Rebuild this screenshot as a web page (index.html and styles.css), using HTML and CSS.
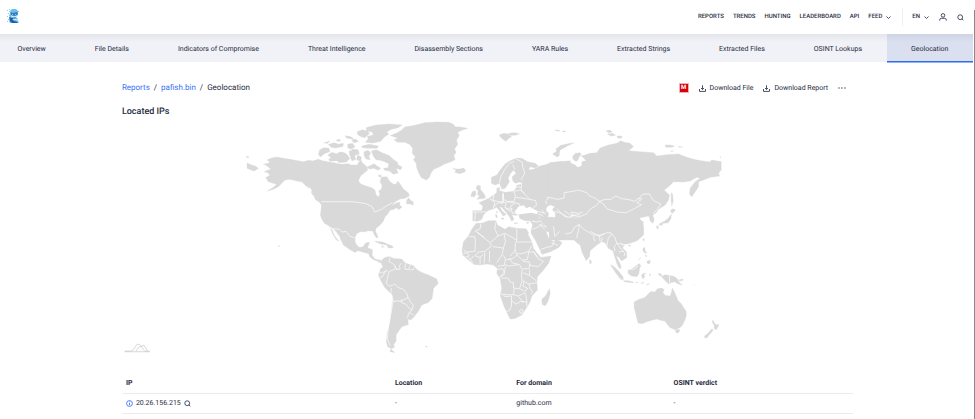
FILE: index.html
```html
<!DOCTYPE html>
<html lang="en">
<head>
<meta charset="utf-8">
<title>Geolocation</title>
<link rel="stylesheet" href="styles.css">
</head>
<body>
<header class="top">
  <a class="logo" href="#" aria-label="Home">
    <svg viewBox="0 0 14 16" width="14" height="16">
      <path d="M4 3l2-2h4l2 2v4l-2 2 2 2-1 1 2 2-1 1H4l-1-2 1-3-1-3 2-2z" fill="#6fbdea"/>
      <path d="M3 9l3 1 4-1-2 2H6l2 2 4 1-1 1-5 0-2-2z" fill="#1c5fae"/>
      <path d="M4 4l3 1 4-1 1 2-3 2-4-1z" fill="#2580c8"/>
      <path d="M6 6h1v1H6zM9 6h1v1H9z" fill="#e8a09c"/>
      <path d="M5 8l3 1 3-1M7 11l4 1" fill="none" stroke="#d9f1fc"/>
      <path d="M1 2h1v1H1zM3 1h1v1H3zM2 5h1v1H2zM1 8h1v1H1zM2 11h1v1H2zM1 13h1v1H1zM12 3h1v1h-1zM3 3h1v1H3z" fill="#8fcff0"/>
    </svg>
  </a>
  <nav class="menu" aria-label="Main">
    <a href="#">REPORTS</a>
    <a href="#">TRENDS</a>
    <a href="#">HUNTING</a>
    <a href="#">LEADERBOARD</a>
    <a href="#">API</a>
    <button type="button">FEED <svg class="chev" viewBox="0 0 5 3"><path d="M.5.5l2 2 2-2"/></svg></button>
  </nav>
  <div class="tools">
    <button type="button">EN <svg class="chev" viewBox="0 0 5 3"><path d="M.5.5l2 2 2-2"/></svg></button>
    <button type="button" aria-label="Account"><svg class="line" viewBox="0 0 8 8" width="8" height="8"><circle cx="4" cy="2.4" r="1.8"/><path d="M.7 7.6V7q0-1.700 1.700-1.700h3.200Q7.300 5.300 7.300 7v.6"/></svg></button>
    <button type="button" aria-label="Search"><svg class="line" viewBox="0 0 7 7" width="7" height="7"><circle cx="3.200" cy="3.200" r="2.400"/><path d="M4.900 4.900l1.400 1.400"/></svg></button>
  </div>
</header>
<nav class="tabs" aria-label="Report sections">
  <a href="#">Overview</a>
  <a href="#">File Details</a>
  <a href="#">Indicators of Compromise</a>
  <a href="#">Threat Intelligence</a>
  <a href="#">Disassembly Sections</a>
  <a href="#">YARA Rules</a>
  <a href="#">Extracted Strings</a>
  <a href="#">Extracted Files</a>
  <a href="#">OSINT Lookups</a>
  <a href="#" class="active" aria-current="page">Geolocation</a>
</nav>
<main class="content">
  <div class="bar">
    <nav class="crumbs" aria-label="Breadcrumb"><a href="#">Reports</a><span>/</span><a href="#">pafish.bin</a><span>/</span><span>Geolocation</span></nav>
    <div class="actions">
      <span class="badge">M</span>
      <button type="button"><svg class="line" viewBox="0 0 7 7" width="7" height="7"><path d="M3.500.3v4M2 3l1.500 1.500L5 3M.5 4v2.400h6V4"/></svg>Download File</button>
      <button type="button"><svg class="line" viewBox="0 0 7 7" width="7" height="7"><path d="M3.500.3v4M2 3l1.500 1.500L5 3M.5 4v2.400h6V4"/></svg>Download Report</button>
      <button type="button" aria-label="More"><svg class="dots" viewBox="0 0 8 2" width="8" height="2"><circle cx="1" cy="1" r=".7"/><circle cx="4" cy="1" r=".7"/><circle cx="7" cy="1" r=".7"/></svg></button>
    </div>
  </div>
  <h1>Located IPs</h1>
  <svg class="map" viewBox="366 360 2193 708" role="img" aria-label="World map">
    <!-- Alaska, western Canada, western US, Mexico -->
    <g transform="translate(705 345)">
      <path class="land" d="M92 150L85 147 100 145 104 140 96 135 110 129 125 126 145 130 165 133 188 137 205 140 222 136 232 138 250 133 262 137 278 140 296 143 318 148 340 146 352 152V370L360 385 375 400 388 412 370 407 345 397 330 388 325 375 312 362 302 348 287 336 268 325 260 312 256 300 258 285 259 270 254 262 240 252 235 236 228 222 215 208 200 200 185 198 165 193 150 195 140 205 130 215 115 223 97 228 115 217 125 208 112 204 100 200 92 188 105 180 96 172 88 171 96 166 108 163z"/>
      <path class="land" d="M36 144l14 6 12 4 8 6-12 8-10-3-12-5zM35 124l6 1-1 3-6-1zM201 201l14 5 8 14-9-6zM228 229l6 5 3 9-6-5zM240 251l12 4 8 9-8-3zM285 337l5 6 7 17 9 13 7 5-9-3-10-16zM130 391l4 2-3 2z"/>
      <path class="land" d="M254 104l12-6 16 2 2 10-16 6-12 10-6-8zM278 120l12-8 14 4 10-5 14 2 10 8 6 10-12 10-18 2-10-6-20 2-3-7 7-4zM280 88l18-5 12 5 14-3-4 10-18 4-14-2zM331 63l14 2 10 5-18-1zM266 84l18-6-6 7zM338 88l14-3 8 10-14 8-8-5zM342 108l12-2 9 10-7 12-12-6zM304 75l10-2 2 5-10 1z"/>
    </g>
    <!-- Eastern North America, the Arctic islands, Greenland -->
    <g transform="translate(1020 345)">
      <path class="land" d="M0 150L20 152 40 150 52 150 55 143 62 135 68 145 72 148 80 155 83 165 75 172 62 182 55 197 62 207 78 213 95 218 105 226 108 240 116 246 119 236 116 228 124 222 126 212 120 200 124 186 140 185 148 198 160 208 168 208 173 198 182 210 190 222 205 234 208 242 195 250 180 252 165 260 155 272 170 263 180 262 178 270 186 276 176 284 170 278 158 284 150 285 143 297 135 305 130 318 120 330 108 340 106 348 112 362 110 369 103 360 98 348 85 347 75 350 60 350 50 356 45 366 45 380 50 394 60 398 72 394 76 384 88 382 85 392 80 402 76 408 60 402 45 412 30 404 10 390 0 370z"/>
      <path class="land" d="M200 255l6-7 5 8 8 4 1 10-9-3-12-1zM78 38l30-8 40-3 38 3-12 8-20 5-14 8 6 6-14 10-10 12-24 5-22-2 8-10-2-8 18-4-4-9-16-3zM52 50l14-6 16 4 6 8-14 12-14-4-8-6zM65 93l22-5 28 5-4 7-28 0-16-2zM16 62l16 4 8 7-20-4zM35 75l12-3 8 8-14 3zM0 90l10-4-2 9zM2 112l12 3 10 14-4 12-20-4zM36 102l18 2 4 12-10 4-12-6zM30 126l12-4 6 10-12 6zM52 120l12 6-2 12-12-3zM72 110l12-4 8 8-6 10 4 10-12-2-6-10zM94 108l14-4 20 10 20 8 10 10 14 10 2 8 12 6-4 8-14-4 6 14-14 4-12-10-14-2-4-6 14-2 2-12-12-6-14-4-12-2-8-10zM90 152l12-6 10 8 10 6-8 6-12-6-14 2-8-6zM115 180l9 1-2 5-6-1z"/>
      <path class="land" d="M150 62l20-8 14-8 10-10 30-5 30-8 34-2 38 1 14 6 5 7 15 1 23 4-18 6-12 6 4 10-8 14 4 12-10 14 5 10-7 10 4 12-14 7-18 6-14 8-18 8-8 10-5 14-9 8-15-7-8-14-6-16-2-14-8-10 6-8-10-12 2-14-10-12-14-6-22 0-10-8 12-4-16-6z"/>
      <path class="land" d="M338 160l10 2 12 0 10-3 6 6-2 6-16 5-14-4 4-6zM104 378l18 3 14 8-14-2-14-6zM140 390l14 1 4 5-14 1zM124 393l8 2-6 2z"/>
      <path class="border" d="M-57 260h90l20 2 25 4 18 9 8 16 20-8 14-10 20-10M-30 339l18 3 10 0 8 9 12-2 12 15 13 4M-127 22v59M60 402l8 4"/>
    </g>
    <!-- Central and South America -->
    <g transform="translate(1080 705)">
      <path class="land" d="M0 38l10-2 4-8 10-4-2 14 15 6-1 16 8 12 12 2 8 2-4 8-8-6-12-4-12-10-2-8-13-4-13-6zM56 20l12 1 12 5 8 4-12-1-14-6zM83 33l14 1 3 4-14 1zM46 0l6 3 2 6-6-4zM196 333l6 1-3 3z"/>
      <path class="land" d="M62 82l6-10 10-6 12-1 10 5 25 2 10 12 25 8 12 13 13 7 20 8 25 12 4 13-14 15-4 30-11 12-20 8-10 18-13 17-10 10-9-3 2 16-20 7-7 10-10 15 0 18-8 12 4 5-9 6-12-6-4-14 2-24 9-38 5-42 3-36-25-25-12-22-6-13 6-20 8-5zM92 342l12 10-14-2z"/>
      <path class="border" d="M90 67l-4 12 14 8 6 6-2 10-16 6-4 12-2 10-4 14 10 8 8-2 8-4 10 10 16 6 10 12 4 14-12 4-8 6-14-2-8 4-6-14-4-14 2-14M94 182l4 20-4 26-6 28-4 30-2 24 8 22M56 110l10 4 10-6-8 16-10 4M76 104l8 6M112 104l-8-10M108 104l12-2-2-10 6-8M136 86l-2 16 12 2 4-14M148 104l12 0 2-8M146 188l4 12 10 10-4 14-10-6-8-10-14-6 0-10M148 232l12 8M156 224l-10 10-4 14"/>
    </g>
    <!-- Europe -->
    <g transform="translate(1350 360)">
      <path class="land" d="M124 172L140 165 150 150 165 132 180 122 200 114 215 115 232 125 255 130 265 138 255 144 240 140 235 150 250 148 270 138 285 134 300 130 330 126 360 122V334H265V318H250L240 302H225L208 295 207 284 200 286 185 285 192 298 185 304 178 290 170 280 155 262 148 260 158 275 168 283 160 288 150 275 140 262 125 268 112 272 100 285 95 298 82 304 68 302V272H95L98 258 86 248 105 240 118 234 130 225 140 218V205L148 202V212L165 217 190 214 198 205 200 196 215 192 210 186 195 190 188 182 186 170 198 160 190 150 180 162 174 175 178 185 165 205 155 208 148 190 135 195 124 190z"/>
      <path class="land" d="M82 195l10 4-2 8 8 10 8 12-2 6-24 3 8-9-6-6 2-10-6-8zM66 215l10-3 2 10-6 9-10-2zM148 44l14-4 12 2 10 8-10 6-6 8-10-6-8-8zM176 40l16-2 16 3-12 5-16 0zM308 102l12-6-2-8 14-8 28-10-12 10-18 10-4 12-4 8zM316 30l14 2-12 0zM338 33l8 1-8 1zM136 284l4 0 2 8-4 1zM138 276l4-2 0 6zM152 294l9 0-2 5zM192 308l12 1-10 2zM228 308l9-2-4 5z"/>
      <path class="sea" d="M194 275l10-15 17-4 7 9 11-5 24 14-2 9-17-5-30 4-14 2zM290 262l12-8 12 6-8 8 8 12 0 16-10 4-8-10 2-10-8-10z"/>
      <path class="border" d="M148 190l4-20 12-22 14-18 14-6M188 134l6 14M196 116l20 10 2 16 6 18-12 20M215 186l-2 24 14 16 12 12 18 4 2 14-10 8M68 276l30 0M76 276l-2 26M98 274l22 6M118 236l16 10-4 18M132 222l-4 18 14 4 16 2 0-26M158 222l2 24-20 4-8 10M160 218l0 20 12 6 20 0 4-18-6-12M152 250l20-4 22 2 14 4 4 16-18 6M168 250l-4 12 14 6 6-12 10-6M166 264l14 10 6-10M184 264l2 16 20-2M196 232l20 2 22 4M192 214l18-4 12 8M200 200l12 2M262 274l14 4 12 2M264 282l12 4 10 10M274 270l8 10M288 240l10-6 22-2 20-6 20 4M286 242l4 10M314 262l16 4 8 14 22-4M266 290l12 14 4 26M300 296l20 8 22-4 18 10M336 270l24 18M246 304l20-4 12 4M244 318l14-2 10-14"/>
    </g>
    <!-- Africa, Middle East -->
    <g transform="translate(1350 630)">
      <path class="land" d="M78 40l17 0 20-8 23 0 4 13 23 13 10-8 25 5 28 1 8 14-4 0 13 25 5 20 12 15 10 12 31-4-8 22-15 20-18 20-2 15 2 25-17 18-5 17-12 20-13 20-20 10-15 2-8-17-10-20-12-35 5-20-5-30-10-15 2-15-12-10-20-3-20 3-18-2-17-13-17-15-2-15 4-25 15-17 10-20zM276 266l10-8 12-22 2 14-6 22-8 15-9-3-2-10z"/>
      <path class="land" d="M243 62l8-30 40-12h69v62l-30 0-25-10-19-12 9 25 15 10 4-9 13 6 9 6-10 14-25 13-26 8-5-13-12-25-15-25z"/>
      <path class="border" d="M92 42l-2 14-16 8M78 64l24 18M56 80h18l2 16-2 28-24 2-10-6M80 66l40 32 4 10-20 16-20 2-10 12M138 34l-4 22 10 22-22 18M144 78l20-8 36 20M200 56v34l-4 10-2 22-14 16M162 72l4 22-6 20-32-4M200 96h48M196 118l2 14 20-2 18-6 8-16M160 114l-4 20-16 24M118 122l0 34M104 128l-2 32M90 140l0 24M76 138l12 4 12-8M60 148l12-10M40 130l12-2 6 10-12 2M54 142l14 16M160 136l6 12-4 18-20 2M166 150l20-4 14-10M178 144l8 14 22 6M200 134l20 20 16 2M218 150l14-2 4-24M236 154l4 12 24 4 16-16-16-8-14-22M236 126l14 0 12 14M208 164l8 14-2 18 2 16-8 24 14 6M164 164l12 4 28-4M166 168l-4 26-14 6M142 178l16-2 4 10-10 14M152 204l22 0 6 12 10 2 0 16 16 2M150 252l24 2 16 0 2-18M190 254l14 4 18-8 8-14M218 176l18 0 4-14M218 188l20 8 20 16M238 196l0-18M218 212l18 10 24-4M222 214l-4 14 16 8M236 222l4 14 8 10-6 6M160 254l4 6 20-2 0 30-6 14-12 2M184 272l14 10 14-8 18 2M206 260l14 18M226 250l4 22 0 18M208 302l5-4 6 3-2 7-6 2zM248 34l12 2 18-4 8 20 16 10M248 58l18-8 14-14M268 44l16 14M272 118l18-6 16-4 8-18M304 98l20 8M278 22l16 12M330 28l4 28-2 24M340 30l20 8"/>
    </g>
    <!-- Northern and eastern Asia -->
    <g transform="translate(1650 360)">
      <path class="land" d="M-3 128L35 124 60 128 75 135 82 142 95 138V125L108 122 95 108 120 100 140 98 150 84 175 75 200 70 212 62 222 67 240 70 250 80 235 92 270 95 310 98 320 108 350 104 385 102 410 112 440 120 478 126 485 120 513 125V150L505 160 508 168 480 172 460 180 445 185V200L435 215 425 230 418 222 420 205 435 185 450 175 440 172 420 183 400 186 370 185 355 200 342 210 350 218 358 225 355 240 345 255 325 268 318 278 308 285 312 300 308 310 300 303 296 288 285 290 268 294 275 305 280 325V345L262 360H-3z"/>
      <path class="land" d="M8 102l12-8-2-8 14-10 40-8-14 7-24 8-8 10 2 12-6 6zM168 32l12-2 6 6-12 2zM172 42l16-2 8 6-14 2zM200 48l14 0 2 5-12 2zM68 108l8-8 14-2 4 10-6 12-12 4-8-8zM345 75l14 0 14 3-8 4-18 0zM384 79l13 2-10 1zM362 92l8 1-8 1zM510 110l3 1-2 2zM363 218l4 4 2 20-4 16-2-14zM362 270l8-4 6 5-10 9-4-4zM364 282l-2 14-8 12-14 2-14 6 2-5 16-8 10-8zM318 318l8 2-4 8zM330 314l8-1-4 4zM16 30l12 3-10-1zM38 33l8 1-8 1z"/>
      <path class="sea" d="M-10 262l10-7 14 5-8 8 8 12 1 18-13 2-8-10 2-10-8-8z"/>
      <path class="sea" d="M92 104l4 16-14 4 4-10z"/>
      <path class="border" d="M-10 232l16 2 16 4 20-4 0-16 26-4 16-4 26 8 8 10 16 6 14 10-8 12-18 10-14 16-20 8-20-4-14 6-20-12-20-6 0 16-22 0M148 244l16-6 18 0 14-10 18 8 20 2 20 6 10-8 12 0M148 244l12 8 10 14 30 10 28 2 24-12 22-12-14-6 14-10M264 238l14-16 20 0 12 20 22 10-10 16-14 12M20 266l22 22 16 6 12-6-8-12 22 4 14-4M42 272l20 14 28-2M58 298l20-4 14 4 4 10-14 8-6 12-18 6-16 0-2-32M40 306l-24-6-16 4M92 296l12 10 10 18 24 8 22 8M60 344l22-8 12-22 8 6 12 12"/>
    </g>
    <!-- South and southeast Asia, Oceania -->
    <g transform="translate(1620 660)">
      <path class="land" d="M0-10l15 30 20 25 20 7 20 0 25 6 10 10 10 7 5 20 13 27 10-12 2-18 20-17 15-10 10 3 10 17 13 7 7 23 8 16 6 15-3-22-8-16 8 3 8 12 16-11-1-16-12-12 6-10 16-4 22-8 18-18v-40z"/>
      <path class="land" d="M148 118l5 4 1 7-5 2zM264 77l6-3 0 5zM310 55l3 2-2 7-2-2zM309 84l5-2 1 10 5 8-8-3-4-6zM316 104l4 4-3 3zM322 122l8-1 0 8-6 3-4-5zM302 112l-6 8 4-6zM228 120l8 4 6 12 0 10-6-4-6-12zM211 134l10 5 14 14 14 18 0 9-8-3-14-18zM250 182l14 0 16 4-2 2-26-3zM264 150l12-4 14-10 6-6 6 6-4 10-2 16-6 8-16-2-10-8zM304 164l6-4 8 0-8 4 4 4-4 8-4-3zM286 187l8 0-6 2zM302 188l10 0-8 2zM318 194l10-4-4 4zM328 160l4 4-3 4zM354 160l8 1 4 6-8 0zM364 170l10-6 14 2 14 3 10 8 4 8 10 10-14-4-8-6-10 2-8 4-6-4-8-8zM416 180l10-3 4 3-10 3z"/>
      <path class="faint" d="M438 180l8 6-6-3zM482 238l10 6-8-4zM458 190l10 8-8-4zM486 160l3 6-3-3zM534 226l4 0-3 3z"/>
      <path class="land" d="M282 246l14-8 18-6 10-10 8-8 12 2 8-10 12-2 8 4-4 10 8 8 14 2 4-12 2-12 6 10 6 14 6 14 10 10 6 10 8 12 0 14-4 12-8 16-8 8-14 4-14-5-10-12-6-8-10-2-14-4-18 4-12 4-14 6-12-2-4-14-4-18-4-14z"/>
      <path class="land" d="M405 328l14 1-4 9-7 0zM518 300l4 8 6 6 8-1-2 6-6 10-6-4 0-10-6-8zM515 326l4 4-6 8-8 8-4 7-8 0 0-5 10-8z"/>
      <path class="border" d="M76 42l18-4 10-18 14-6-8 40M114 12l20 18 24 14 22 2 20-8 12 0 12 14 6 18 14 2 14 2M150 34l26 14 16-6M160 48l4 16M178 48l2 18M186 52l-2 16M214 42l-10 14-4 22M230 70l-8 10 2 14M232 72l8 12 14 14-2 10M236 96l14-2M242 68l8 10M388 166v22M266 148l14 0 14-10M40 18l4 30M58 34l-14 16M0 14l20 6"/>
    </g>
    <path class="inset" d="M374 1053h18q10-2 14-13t12-7q8 3 12 16l4 4h14M408 1053l8-12 8-2 8-4 10 17"/>
    <path class="inset" d="M374 1055h76"/>
  </svg>
  <table>
    <thead><tr><th class="ip">IP</th><th class="loc">Location</th><th class="dom">For domain</th><th>OSINT verdict</th></tr></thead>
    <tbody><tr>
      <td><span class="addr"><svg class="info" viewBox="0 0 7 7" width="7" height="7"><circle cx="3.500" cy="3.500" r="2.900"/><path d="M3.500 3v2.200M3.500 1.600v.7"/></svg>20.26.156.215<svg class="line" viewBox="0 0 7 7" width="7" height="7"><circle cx="3.200" cy="3.200" r="2.400"/><path d="M4.900 4.900l1.400 1.400"/></svg></span></td>
      <td>-</td><td>github.com</td><td>-</td>
    </tr></tbody>
  </table>
</main>
<div class="thumb"></div>
</body>
</html>
```
FILE: styles.css
```css
* { box-sizing: border-box; }
body {
  margin: 0;
  background: #fff;
  color: #262b40;
  font: 7px/10px Roboto, sans-serif;
  text-rendering: geometricPrecision;
  overflow-x: hidden;
}
a { color: inherit; text-decoration: none; }
button {
  display: inline-flex;
  align-items: center;
  gap: 4px;
  padding: 0;
  border: 0;
  background: none;
  color: inherit;
  font: inherit;
  text-rendering: inherit;
}
svg { flex: none; }
.line, .chev { fill: none; stroke: #353b52; stroke-width: 0.9; }
.chev { width: 5px; height: 3px; }
.dots { fill: #353b52; }

.top {
  display: flex;
  align-items: center;
  height: 34px;
  padding: 0 11px 0 6px;
}
.logo { display: flex; height: 18px; }
.menu {
  display: flex;
  gap: 9px;
  margin-left: auto;
  font-size: 6px;
  font-weight: 500;
}
.tools {
  display: flex;
  align-items: center;
  gap: 10px;
  height: 18px;
  margin-left: 11px;
  padding-left: 9px;
  border-left: 1px solid #f0f1f5;
  font-size: 6px;
  font-weight: 500;
}

.tabs {
  display: flex;
  height: 28px;
  margin: 0 2px 0 -7px;
  background: linear-gradient(#e4e6ec, #f1f2f8 8px);
}
.tabs a {
  display: flex;
  flex: 1 1 auto;
  align-items: center;
  justify-content: center;
  padding-top: 2px;
  white-space: nowrap;
}
.tabs .active {
  background: linear-gradient(#cfd4e4, #dbe0f0 8px);
  border-bottom: 1px solid #2f6fed;
  box-shadow: 0 1px #8fb2f6;
}

.content { padding: 20px 12.5% 0; }
.bar { display: flex; align-items: center; justify-content: space-between; height: 12px; }
.crumbs { display: flex; gap: 4px; font-size: 8px; }
.crumbs a { color: #3b73f5; }
.actions { display: flex; align-items: center; gap: 10px; margin-right: 7px; }
.badge {
  width: 10px;
  height: 10px;
  border: 1px solid #f3b0b0;
  background: #d8000c;
  color: #fff;
  font-size: 6px;
  font-weight: 700;
  line-height: 8px;
  text-align: center;
}
h1 { margin: 12px 0 2px; font-size: 9px; line-height: 12px; font-weight: 500; }

.map { display: block; width: 100%; height: auto; }
.land { fill: #d9d9d9; stroke: #d9d9d9; stroke-linejoin: round; }
.faint { fill: #ececec; }
.sea { fill: #fff; }
.border { fill: none; stroke: #fff; stroke-width: 2; stroke-linejoin: round; }
.inset { fill: none; stroke: #c4c4c4; stroke-width: 2; }

table { width: 100%; margin-top: 17px; border-collapse: collapse; table-layout: fixed; }
th, td {
  height: 20px;
  padding: 0 4px;
  border-bottom: 1px solid #ececf0;
  text-align: left;
}
th { font-weight: 700; }
.ip { width: 36.8%; }
.loc { width: 16.6%; }
.dom { width: 21.5%; }
.addr { display: flex; align-items: center; gap: 3px; }
.info { fill: none; stroke: #3b73f5; stroke-width: 0.9; }
.thumb { position: absolute; top: 10px; right: 0; bottom: 0; width: 1px; background: #8b8b8b; }
```
